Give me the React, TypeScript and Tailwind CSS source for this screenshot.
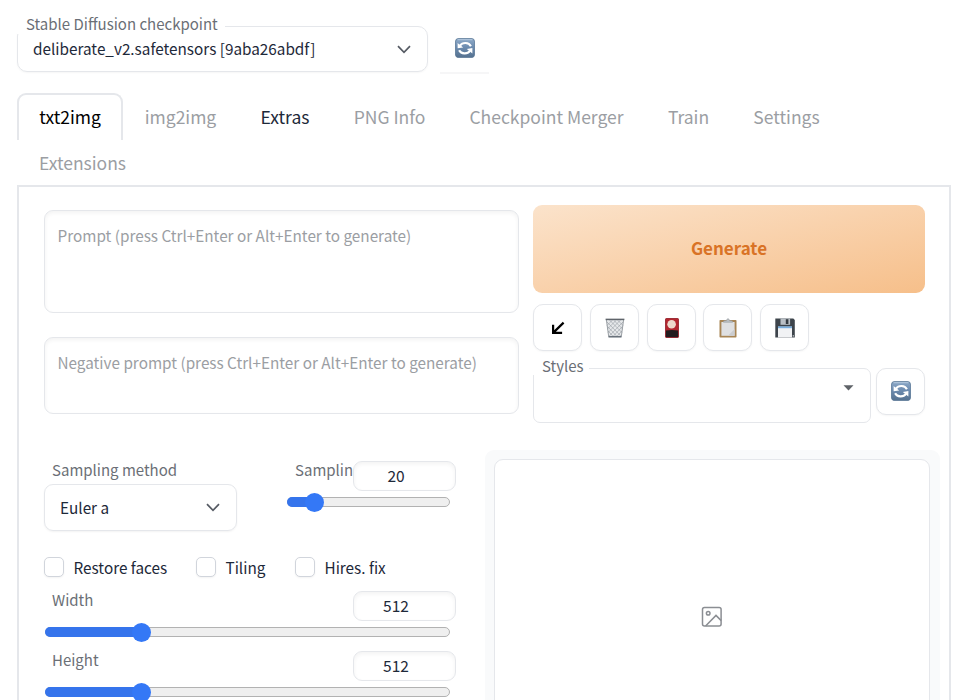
import React from "react";

function RefreshIcon() {
  return (
    <svg width="20" height="20" viewBox="0 0 20 20" className="-mt-px -ml-px block">
      <defs>
        <linearGradient id="blueKey" x1="0" y1="0" x2="0" y2="1">
          <stop offset="0" stopColor="#8fabc9" />
          <stop offset="0.45" stopColor="#6d8cb0" />
          <stop offset="1" stopColor="#55718f" />
        </linearGradient>
      </defs>
      <rect x="0.4" y="0.4" width="19.2" height="19.2" rx="3.4" fill="url(#blueKey)" stroke="#567493" strokeWidth="0.8" />
      <path d="M2.5 1.7h15" stroke="#b7cce0" strokeWidth="0.9" />
      <path d="M15.9 8.2A6.2 5.400 0 0 0 5 7.600" fill="none" stroke="#fff" strokeWidth="2.100" />
      <path d="M2.600 5v5.300l5.600-.9z" fill="#fff" />
      <path d="M4.100 12.200A6.200 5.400 0 0 0 15 12.800" fill="none" stroke="#fff" strokeWidth="2.100" />
      <path d="M17.400 15.400v-5.300l-5.600.9z" fill="#fff" />
    </svg>
  );
}

function ArrowIcon() {
  return (
    <svg width="14" height="14" viewBox="0 0 14 14" className="block" fill="none" stroke="#000" strokeWidth="2.2">
      <path d="M12.6 1.6 2.6 11.4M2.1 3.8v8.1h9" />
    </svg>
  );
}

function TrashIcon() {
  return (
    <svg width="20" height="20" viewBox="0 0 20 20" className="block">
      <path d="M1.2 1.5h17.6L16.4 19H3.6z" fill="#e6e8ea" />
      <path
        d="M2 4l13.8 14M4.5 2 17 14.6M8.5 2 17.6 11M12.5 2 18 7.5M2.6 8.5 12 18.5M3.2 13l5 5.5M18 4 4.2 18M15.500 2 3 14.600M11.500 2 2.400 11M7.500 2 2 7.500M17.400 8.500 8 18.500M16.800 13l-5 5.500"
        stroke="#969ca3"
        strokeWidth="0.6"
      />
      <path d="M1.400 2 3.700 18.600M18.600 2 16.300 18.600" stroke="#858b92" strokeWidth="0.800" />
      <path d="M0.600 1.400h18.800" stroke="#5f646a" strokeWidth="1.500" />
      <path d="M3.500 18.800h13" stroke="#5c6670" strokeWidth="1.400" />
    </svg>
  );
}

function CardIcon() {
  return (
    <svg width="14" height="20" viewBox="0 0 14 20" className="block">
      <rect x="0.300" y="0.300" width="13.400" height="19.400" rx="1.200" fill="#b3262f" />
      <path d="M0.800 12.500q6.200-.8 12.400 0V19.200H0.800z" fill="#231c1f" />
      <circle cx="6.600" cy="6.300" r="4.300" fill="#eed9cc" />
      <rect x="0.500" y="0.500" width="13" height="19" rx="1" fill="none" stroke="#8d1d26" strokeWidth="0.700" />
    </svg>
  );
}

function ClipboardIcon() {
  return (
    <svg width="18" height="20" viewBox="0 0 18 20" className="block">
      <rect x="0.500" y="2" width="17" height="17.600" rx="0.800" fill="#a88555" />
      <rect x="2.400" y="4" width="13.200" height="13.800" fill="#dfe0e2" />
      <path d="M15.600 11v6.800H9z" fill="#cbcdd0" />
      <path d="M4.500 4.300V3l3-.6C7.700.3 10.300.3 10.500 2.400l3 .6v1.300z" fill="#b9bdc1" stroke="#92979b" strokeWidth="0.500" />
    </svg>
  );
}

function FloppyIcon() {
  return (
    <svg width="20" height="20" viewBox="0 0 20 20" className="block">
      <path d="M0.300 0.500h18l1.500 1.500v17.500H0.300z" fill="#3d444b" />
      <rect x="5.500" y="0.500" width="9.600" height="6.300" fill="#b9bfc5" />
      <rect x="10.800" y="1.200" width="2.600" height="4.800" fill="#343a40" />
      <rect x="3" y="8.600" width="14" height="10.900" fill="#f1f2f4" />
      <rect x="3" y="8.400" width="14" height="1.800" fill="#79aede" />
      <path d="M17.700 17.300h1.200v1.200h-1.200z" fill="#d5d8db" />
    </svg>
  );
}

function Chevron() {
  return (
    <svg width="14" height="9" viewBox="0 0 14 9" className="block" fill="none" stroke="#565b64" strokeWidth="1.700">
      <path d="M1 1.200 7 7.300l6-6.100" />
    </svg>
  );
}

function ImageIcon() {
  return (
    <svg width="22" height="22" viewBox="0 0 22 22" className="block" fill="none" stroke="#8b8e93" strokeWidth="1.500">
      <rect x="1.500" y="1.500" width="18.600" height="18.600" rx="2" />
      <circle cx="7.200" cy="7.200" r="1.800" />
      <path d="M4.600 20 15 9.400l5.200 5.200" />
    </svg>
  );
}

function ToolButton({ children }: { children: React.ReactNode }) {
  return (
    <button className="flex h-[47px] w-[49px] shrink-0 items-center justify-center rounded-[10px] border border-gray-200 bg-white pl-px shadow-[0_1px_2px_rgba(0,0,0,0.04)]">
      {children}
    </button>
  );
}

function NumberBox({ value }: { value: string }) {
  return (
    <div className="flex h-[30px] w-[103px] shrink-0 items-start rounded-[9px] border border-gray-200 bg-white pr-[17px] shadow-[inset_0_2px_4px_rgba(0,0,0,0.05)]">
      <span className="w-full text-center text-[15.5px] leading-[26px] text-gray-800">{value}</span>
    </div>
  );
}

function Slider({ fill }: { fill: number }) {
  return (
    <div className="flex h-[20px] items-center">
      <div className="flex h-[10px] w-full items-center rounded-full border border-[#b2b2b2] bg-[#efefef]">
        <div className="-ml-px h-[10px] shrink-0 rounded-l-full bg-[#3574ec]" style={{ width: fill }} />
        <div className="-ml-[10px] size-[19px] shrink-0 rounded-full bg-[#3478f6]" />
      </div>
    </div>
  );
}

function SizeRow({ label, value }: { label: string; value: string }) {
  return (
    <div className="h-[60px]">
      <div className="flex justify-between">
        <span className="pl-2 text-[15px] leading-[17px] text-[#6b6f76]">{label}</span>
        <NumberBox value={value} />
      </div>
      <div className="mt-px ml-px w-[405px]">
        <Slider fill={97} />
      </div>
    </div>
  );
}

function Check({ label, gap }: { label: string; gap: string }) {
  return (
    <label className={"flex items-center " + gap}>
      <span className="size-[20px] shrink-0 rounded-[5px] border border-gray-300 bg-white shadow-[0_1px_2px_rgba(0,0,0,0.05)]" />
      <span className="ml-[9.500px] whitespace-nowrap text-[15.3px] leading-[20px] text-gray-800">{label}</span>
    </label>
  );
}

const tabs = [
  { name: "txt2img", style: "w-[106px] rounded-t-[9px] border-2 border-b-0 border-gray-200 pb-[2px] text-black" },
  { name: "img2img", style: "w-[115px] text-[#9b9ea3]" },
  { name: "Extras", style: "w-[94px] text-gray-800" },
  { name: "PNG Info", style: "w-[115px] text-[#9b9ea3]" },
  { name: "Checkpoint Merger", style: "w-[199px] text-[#9b9ea3]" },
  { name: "Train", style: "w-[85px] text-[#9b9ea3]" },
  { name: "Settings", style: "w-[111px] text-[#9b9ea3]" },
  { name: "Extensions", style: "w-[131px] pb-[2px] text-[#9b9ea3]" },
];

export default function App() {
  return (
    <div className="h-[700px] w-[970px] overflow-hidden bg-white pl-[17px] font-['Noto_Sans_CJK_SC',sans-serif]">
      <header className="flex pt-[14px]">
        <div className="h-[58px] w-[411px] pt-[12px]">
          <div className="relative flex h-[46px] items-center justify-between rounded-[10px] border border-gray-200 pr-4 pl-[15px] shadow-[0_1px_2px_rgba(0,0,0,0.04)]">
            <span className="absolute -top-[13px] -left-px h-[20px] w-[208px] bg-white pl-[9px] text-[15px] leading-[19px] whitespace-nowrap text-[#6b6f76]">
              Stable Diffusion checkpoint
            </span>
            <span className="relative pb-[2px] text-[15.3px] leading-[24px] whitespace-nowrap text-gray-800">deliberate_v2.safetensors [9aba26abdf]</span>
            <Chevron />
          </div>
        </div>
        <button className="mt-[10px] ml-[12px] flex h-[50px] w-[49px] items-center justify-center border-b-2 border-[#f6f6f7] pt-px pl-px">
          <RefreshIcon />
        </button>
      </header>

      <nav className="mt-[19px] flex h-[92px] w-[934px] flex-wrap content-start">
        {tabs.map((tab) => (
          <button key={tab.name} className={"flex h-[47px] items-center justify-center text-[17.5px] leading-[24px] whitespace-nowrap " + tab.style}>
            {tab.name}
          </button>
        ))}
      </nav>

      <main className="flex h-[540px] w-[934px] flex-col border-2 border-gray-200">
        <section className="flex pt-[18px] pl-[25px]">
          <div className="mt-[5px] w-[475px] text-[15.3px] leading-[22px] text-[#9b9ea3]">
            <div className="h-[103px] rounded-[9px] border border-gray-200 px-[12.500px] pt-[13px] shadow-[inset_0_2px_4px_rgba(0,0,0,0.05)]">
              Prompt (press Ctrl+Enter or Alt+Enter to generate)
            </div>
            <div className="mt-[24px] h-[77px] rounded-[9px] border border-gray-200 px-[12.500px] pt-[13px] shadow-[inset_0_2px_4px_rgba(0,0,0,0.05)]">
              Negative prompt (press Ctrl+Enter or Alt+Enter to generate)
            </div>
          </div>
          <div className="ml-[14px] w-[392px]">
            <button className="h-[88px] w-full rounded-[9px] bg-linear-to-br from-[#fbe3cb] to-[#f6bf8a] pb-[2px] text-[17px] font-bold text-[#d97326]">
              Generate
            </button>
            <div className="mt-[11px] flex gap-[7.800px]">
              <ToolButton><ArrowIcon /></ToolButton>
              <ToolButton><TrashIcon /></ToolButton>
              <ToolButton><CardIcon /></ToolButton>
              <ToolButton><ClipboardIcon /></ToolButton>
              <ToolButton><FloppyIcon /></ToolButton>
            </div>
            <div className="mt-[17px] flex justify-between">
              <div className="relative h-[55px] w-[338px] rounded-[7px] border border-gray-200">
                <span className="absolute -top-[12px] -left-px h-[18px] w-[56px] bg-white pl-[9px] text-[15px] leading-[17px] text-[#6b6f76]">Styles</span>
                <svg width="11" height="6" viewBox="0 0 11 6" className="mt-[16px] ml-[309px] block">
                  <path d="M0.500 0.300h10L5.500 5.600z" fill="#5f6368" />
                </svg>
              </div>
              <ToolButton><RefreshIcon /></ToolButton>
            </div>
          </div>
        </section>

        <section className="flex pt-[27px] pl-[25px]">
          <div className="w-[412px] pt-[10px]">
            <div className="flex h-[97px]">
              <div className="w-[193px]">
                <div className="pl-2 text-[15px] leading-[19px] text-[#6b6f76]">Sampling method</div>
                <div className="mt-[5px] flex h-[47px] items-center justify-between rounded-[9px] border border-gray-200 px-[15px] pr-[16px] shadow-[0_1px_2px_rgba(0,0,0,0.05)]">
                  <span className="pb-[2px] text-[15.3px] leading-[24px] text-gray-800">Euler a</span>
                  <Chevron />
                </div>
              </div>
              <div className="ml-[50px] w-[169px]">
                <div className="flex">
                  <span className="w-[66px] shrink-0 pl-2 text-[15px] leading-[19px] whitespace-nowrap text-[#6b6f76]">Samplin</span>
                  <div className="pt-px">
                    <NumberBox value="20" />
                  </div>
                </div>
                <div className="mt-px w-[163px]">
                  <Slider fill={28} />
                </div>
              </div>
            </div>
            <div className="flex h-[20px]">
              <Check label="Restore faces" gap="w-[152px]" />
              <Check label="Tiling" gap="w-[99px]" />
              <Check label="Hires. fix" gap="w-[120px]" />
            </div>
            <div className="mt-[14px]">
              <SizeRow label="Width" value="512" />
              <SizeRow label="Height" value="512" />
            </div>
          </div>
          <div className="ml-[29px] h-[330px] w-[455px] rounded-t-[9px] bg-gray-50 pt-[9px] pr-[10px] pl-[9px]">
            <div className="flex h-[316px] items-center justify-center rounded-[9px] border border-gray-200 bg-white">
              <ImageIcon />
            </div>
          </div>
        </section>
      </main>
    </div>
  );
}
